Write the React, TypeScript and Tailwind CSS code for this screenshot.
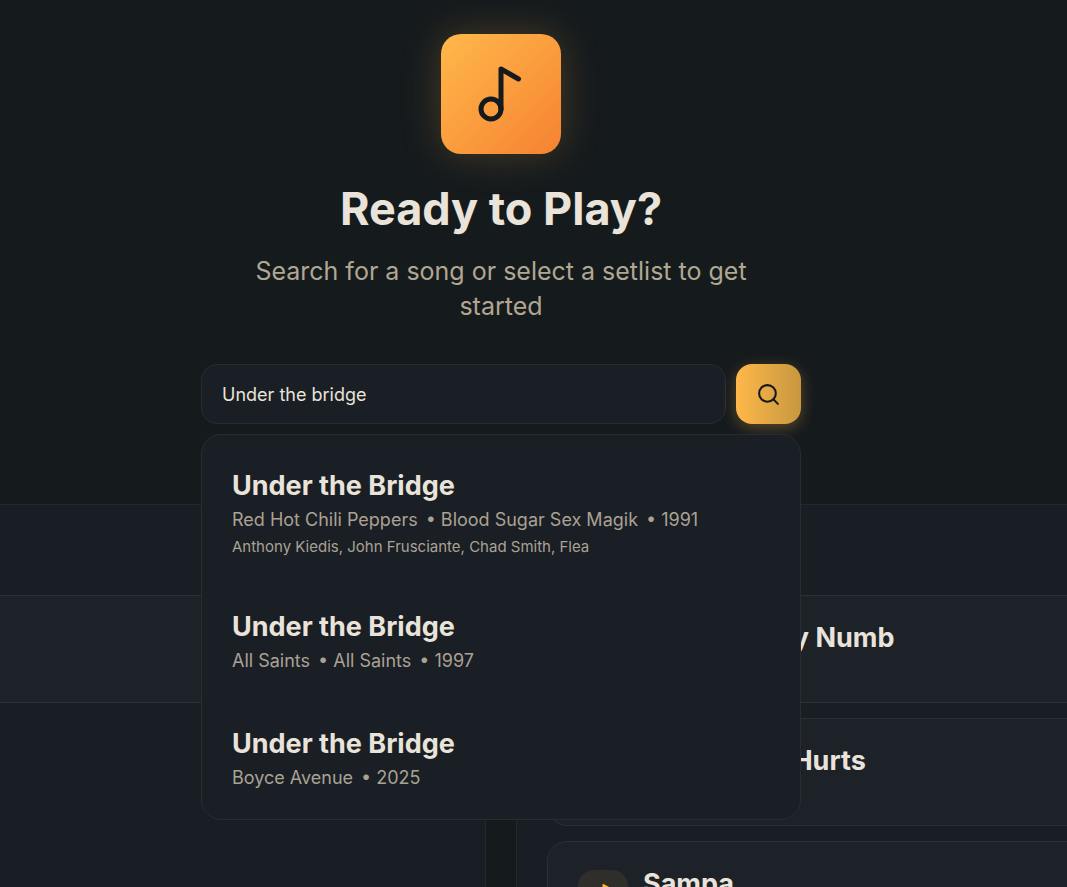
import { Music2, Search } from "lucide-react";
import React from "react";

const results = [
  {
    id: 1,
    title: "Under the Bridge",
    details: ["Red Hot Chili Peppers", "Blood Sugar Sex Magik", "1991"],
    members: "Anthony Kiedis, John Frusciante, Chad Smith, Flea",
  },
  {
    id: 2,
    title: "Under the Bridge",
    details: ["All Saints", "All Saints", "1997"],
  },
  { id: 3, title: "Under the Bridge", details: ["Boyce Avenue", "2025"] },
];

const songs = ["Comfortably Numb", "Everybody Hurts", "Sampa"];

const Panel = ({ children }: { children: React.ReactNode }) => (
  <section className="border border-[#24282d] bg-[#191d24] px-[30px] pt-[90px] pb-[30px]">
    <ul className="flex flex-col gap-[15px]">{children}</ul>
  </section>
);

const Card = ({ children }: { children?: React.ReactNode }) => (
  <li className="flex h-[108px] items-center gap-[15px] rounded-[20px] border border-[#2b3036] bg-[#1d2128] px-[30px]">
    {children}
  </li>
);

const App = () => {
  return (
    <div className="h-screen overflow-hidden bg-[#151a1d] font-['Inter','Liberation_Sans',sans-serif] text-[#e9e3d9]">
      <main>
        {/**Hero */}
        <div className="mr-[65px] flex flex-col items-center pt-[34px] pb-20">
          <div className="flex size-[120px] items-center justify-center rounded-[20px] bg-linear-135 from-[#ffb84a] to-[#f58232] text-[#151a1d] shadow-[0_0_40px_rgba(255,182,72,0.22)]">
            <Music2 size={60} />
          </div>
          <h1 className="mt-7 text-[45px] leading-[54px] font-bold">
            Ready to Play?
          </h1>
          <p className="mt-[18px] max-w-[540px] text-center text-[25px] leading-[35px] text-[#b0a792]">
            Search for a song or select a setlist to get started
          </p>
          {/**Search */}
          <div className="relative mt-10 w-full max-w-[600px]">
            <form
              className="flex gap-2.5"
              onSubmit={(e) => e.preventDefault()}
            >
              <input
                type="text"
                aria-label="Search for a song"
                defaultValue="Under the bridge"
                className="h-[60px] min-w-0 flex-1 rounded-2xl border border-[#292d32] bg-[#1a1e25] px-5 text-lg outline-none"
              />
              <button
                type="submit"
                aria-label="Search"
                className="flex h-[60px] w-[65px] items-center justify-center rounded-2xl bg-linear-to-r from-[#ffb84a] to-[#c8973f] text-[#151a1d] shadow-[0_4px_15px_rgba(255,182,72,0.3)]"
              >
                <Search size={25} />
              </button>
            </form>
            {/**Results */}
            <ul className="absolute top-full z-10 mt-2.5 w-full rounded-[20px] border border-[#292d32] bg-[#1a1e25] pt-[5px] pb-1">
              {results.map((song) => (
                <li key={song.id} className="px-[30px] pt-7 pb-[22px]">
                  <p className="text-[27px] leading-9 font-bold">
                    {song.title}
                  </p>
                  <p className="text-lg leading-[31px] text-[#aaa294]">
                    {song.details.map((detail, i) => (
                      <span key={i}>
                        {i > 0 && <span className="ml-2">• </span>}
                        {detail}
                      </span>
                    ))}
                  </p>
                  {song.members && (
                    <p className="text-[15px] leading-6 text-[#aaa294]">
                      {song.members}
                    </p>
                  )}
                </li>
              ))}
            </ul>
          </div>
        </div>
        {/**Setlists and songs */}
        <div className="-mr-[63px] -ml-32 grid grid-cols-2 gap-[30px]">
          <Panel>
            <Card />
          </Panel>
          <Panel>
            {songs.map((song) => (
              <Card key={song}>
                <div className="flex size-[50px] shrink-0 items-center justify-center rounded-2xl bg-[#302e2a] text-[#ffb627]">
                  <Music2 size={25} />
                </div>
                <p className="mt-6 self-start text-[27px] leading-9 font-bold">
                  {song}
                </p>
              </Card>
            ))}
          </Panel>
        </div>
      </main>
    </div>
  );
};

export default App;
